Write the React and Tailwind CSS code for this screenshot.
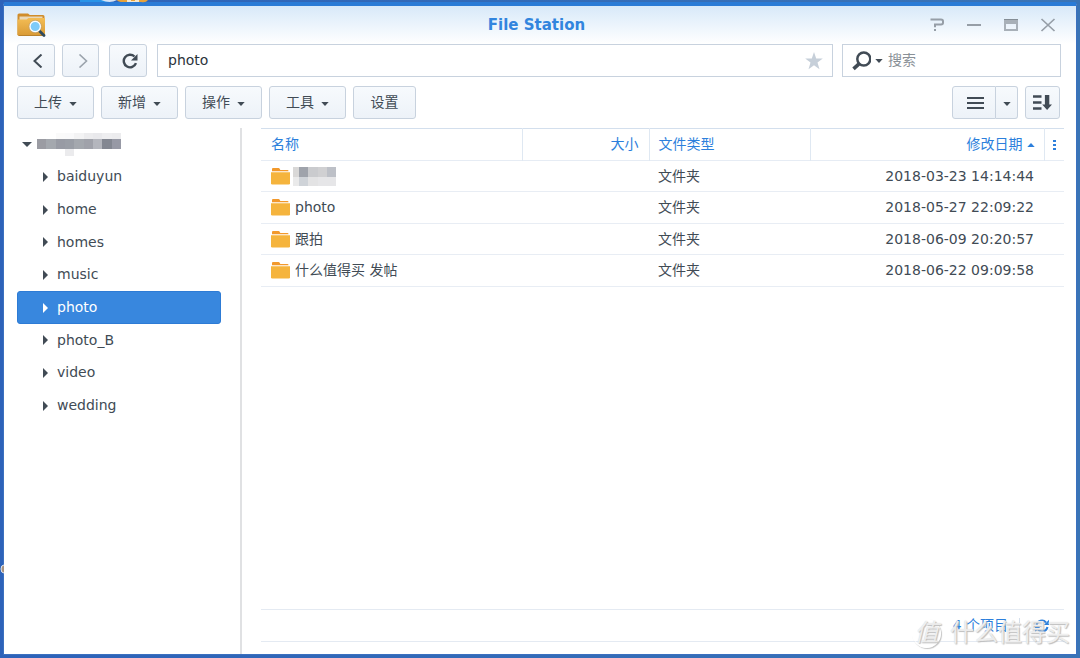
import React from "react";

const menus = ["上传", "新增", "操作", "工具"];
const folders = ["baiduyun", "home", "homes", "music", "photo", "photo_B", "video", "wedding"];
const files = [
  { name: null, date: "2018-03-23 14:14:44" },
  { name: "photo", date: "2018-05-27 22:09:22" },
  { name: "跟拍", date: "2018-06-09 20:20:57" },
  { name: "什么值得买 发帖", date: "2018-06-22 09:09:58" },
];

const buttonStyle =
  "flex h-[33px] items-center justify-center rounded-[3px] border border-[#c8d2de] bg-linear-to-b from-[#f7fafd] to-[#edf2f8] text-[#414b55]";

function Caret({ className = "" }) {
  return (
    <svg width="8" height="4" viewBox="0 0 8 4" className={className} aria-hidden="true">
      <path d="M.3 0h7.4L4 4z" fill="currentColor" />
    </svg>
  );
}

function AppIcon() {
  return (
    <svg width="30" height="26" viewBox="0 0 30 26" aria-hidden="true">
      <defs>
        <linearGradient id="folderFront" x2="0" y2="1">
          <stop stopColor="#f3bd55" />
          <stop offset="1" stopColor="#d99a35" />
        </linearGradient>
      </defs>
      <path d="M.5 3Q.5 1.500 2 1.500h9l1.800 1.500H26q1.500 0 1.500 1.500V23H.5z" fill="#d08d2c" />
      <path d="M2.500 4.500h23v4h-23z" fill="#e9d9ba" />
      <path d="M.5 7.500h9L11.500 6h16.500v16.500q0 1.300-1.300 1.300H1.800Q.5 23.800.5 22.500z" fill="url(#folderFront)" />
      <path d="M1.500 23.500h26" stroke="#b8812d" strokeWidth="1" />
      <path d="M22.500 19l4.500 4.500" stroke="#2f4a5c" strokeWidth="2.800" strokeLinecap="round" />
      <circle cx="18.200" cy="14.500" r="5.300" fill="#7ecbfa" stroke="#fff" strokeWidth="1.500" />
      <circle cx="18.200" cy="14.500" r="6.200" fill="none" stroke="#a8977c" strokeWidth=".5" />
    </svg>
  );
}

function FolderIcon() {
  return (
    <svg width="19" height="17" viewBox="0 0 19 17" className="shrink-0" aria-hidden="true">
      <path d="M1 3.200V1Q1 0 2 0h5.600q.8 0 1.200.9l.5 1.100H16.500q1 0 1 1v.2z" fill="#f2992c" />
      <path d="M0 4.200h19v11q0 1.300-1.300 1.300H1.300Q0 16.500 0 15.200z" fill="#f5b43d" />
    </svg>
  );
}

function Refresh({ size, className }) {
  return (
    <svg width={size} height={size} viewBox="0 0 16 16" className={className} aria-hidden="true">
      <path d="M14 10.200A6.300 6.300 0 1 1 12.500 3.500" fill="none" stroke="currentColor" strokeWidth="2.400" />
      <path d="M15.500 1v6.500H9z" fill="currentColor" />
    </svg>
  );
}

function SyncIcon() {
  return (
    <svg width="16" height="14" viewBox="0 0 16 14" aria-hidden="true">
      <path d="M2.500 6A5.500 5.500 0 0 1 12 3.500M13.500 8A5.500 5.500 0 0 1 4 10.500" fill="none" stroke="currentColor" strokeWidth="2" />
      <path d="M15 .8V6H9.800zM1 13.200V8h5.200z" fill="currentColor" />
    </svg>
  );
}

function HiddenHost() {
  const tones = ["#9b9ca3", "#a4a8ae", "#989ba4", "#9a9ea6", "#a4a8ae", "#a0a2aa", "#b4b6bd", "#838791", "#9799a5"];
  const tops = ["#fff", "#fff", "#fafafa", "#f9f9fa", "#f3f3f4", "#ececee", "#e9e9ec", "#eeeef0", "#ececee"];
  return (
    <svg width="84" height="24" viewBox="0 0 84 24" shapeRendering="crispEdges" aria-hidden="true">
      {tones.map((tone, i) => (
        <g key={i}>
          <rect x={i * 9.33} y="1" width="9.4" height="6" fill={tops[i]} />
          <rect x={i * 9.33} y="7" width="9.4" height="10" fill={tone} />
        </g>
      ))}
      <rect x="28" y="17" width="9.400" height="7" fill="#ebebed" />
    </svg>
  );
}

function HiddenName() {
  return (
    <svg width="43" height="19" viewBox="0 0 43 19" shapeRendering="crispEdges" aria-hidden="true">
      <path d="M0 0h6v10H0z" fill="#d9d8d7" />
      <path d="M6 0h9v10H6z" fill="#9fa3ab" />
      <path d="M15 0h10v10H15z" fill="#cacbce" />
      <path d="M25 0h9v10h-9z" fill="#d0d0d2" />
      <path d="M34 0h9v10h-9z" fill="#bdc0c7" />
      <path d="M0 10h6v9H0z" fill="#eaeaea" />
      <path d="M6 10h9v9H6z" fill="#cfd3d8" />
      <path d="M15 10h10v9H15z" fill="#e3e3e4" />
      <path d="M25 10h18v9H25z" fill="#e6e6e8" />
    </svg>
  );
}

function TitleBar() {
  return (
    <header className="grid h-[38px] grid-cols-[1fr_auto_1fr] items-center bg-linear-to-b from-[#d8e9f9] to-white pr-5 pl-[13px]">
      <AppIcon />
      <h1 className="text-[15px] font-bold text-[#3285de]">File Station</h1>
      <div className="flex items-center justify-end gap-[21px] text-[#969ea7]">
        <button aria-label="帮助">
          <svg width="16" height="14" viewBox="0 0 16 14" aria-hidden="true">
            <path d="M1.500 1.500h10.500q2 0 2 1.700v1.600q0 1.700-2 1.700H6v2.700" fill="none" stroke="currentColor" strokeWidth="2" />
            <path d="M5 11h2v2H5z" fill="currentColor" />
          </svg>
        </button>
        <button aria-label="最小化">
          <svg width="16" height="14" viewBox="0 0 16 14" aria-hidden="true">
            <path d="M1 6h14v2H1z" fill="currentColor" />
          </svg>
        </button>
        <button aria-label="最大化">
          <svg width="16" height="14" viewBox="0 0 16 14" aria-hidden="true">
            <path d="M1 1h14v12H1zM3 6v5h10V6z" fill="#a8b0b8" fillRule="evenodd" />
            <path d="M1 1.500h14" stroke="#848d96" strokeWidth="1" />
          </svg>
        </button>
        <button aria-label="关闭">
          <svg width="16" height="14" viewBox="0 0 16 14" aria-hidden="true">
            <path d="M1.500 1l13 12M14.500 1l-13 12" stroke="currentColor" strokeWidth="1.700" />
          </svg>
        </button>
      </div>
    </header>
  );
}

function NavBar() {
  return (
    <div className="flex pr-[15px] pl-[13px]">
      <button aria-label="后退" className={`${buttonStyle} w-[38px]`}>
        <svg width="10" height="14" viewBox="0 0 10 14" className="ml-1" aria-hidden="true">
          <path d="M8.500.5L1.500 7l7 6.500" fill="none" stroke="currentColor" strokeWidth="2" />
        </svg>
      </button>
      <button aria-label="前进" className={`${buttonStyle} ml-[7px] w-[37px]`}>
        <svg width="10" height="14" viewBox="0 0 10 14" className="ml-1 text-[#9ba3ac]" aria-hidden="true">
          <path d="M1.500.5l7 6.500-7 6.500" fill="none" stroke="currentColor" strokeWidth="1.600" />
        </svg>
      </button>
      <button aria-label="刷新" className={`${buttonStyle} ml-[10px] w-[38px]`}>
        <Refresh size={16} className="ml-1" />
      </button>
      <div className="ml-[10px] flex h-[33px] min-w-0 flex-1 items-center border border-[#c8d2de] bg-white pr-[9px]">
        <input aria-label="路径" defaultValue="photo" className="min-w-0 flex-1 bg-transparent px-[10px] text-[14px] text-[#2b333b] outline-none" />
        <button aria-label="收藏">
          <svg width="18" height="18" viewBox="0 0 18 18" aria-hidden="true">
            <path d="M9 0l2.200 6.400h6.600l-5.300 4.100 2 6.700L9 13.200l-5.500 4 2-6.700L.2 6.400h6.600z" fill="#c6cfd9" />
          </svg>
        </button>
      </div>
      <div className="ml-[9px] flex h-[33px] w-[219px] items-center border border-[#c8d2de] bg-white pl-2 text-[#414b55]">
        <button aria-label="搜索选项" className="flex items-center gap-1">
          <svg width="20" height="20" viewBox="0 0 20 20" aria-hidden="true">
            <circle cx="12.800" cy="8" r="6.500" fill="none" stroke="currentColor" strokeWidth="2.500" />
            <path d="M8 12.800l-5.500 5" stroke="currentColor" strokeWidth="3.600" />
          </svg>
          <Caret />
        </button>
        <input type="search" aria-label="搜索" placeholder="搜索" className="ml-[5px] min-w-0 flex-1 bg-transparent text-[14px] outline-none placeholder:text-[#899097]" />
      </div>
    </div>
  );
}

function ToolBar() {
  return (
    <div className="mt-[9px] flex gap-[7px] pr-[16px] pl-[13px] text-[14px]">
      {menus.map((label) => (
        <button key={label} className={`${buttonStyle} w-[77px] gap-[7px]`}>
          {label}
          <Caret className="mt-[3px]" />
        </button>
      ))}
      <button className={`${buttonStyle} w-[63px]`}>设置</button>
      <div className="ml-auto flex">
        <button aria-label="列表视图" className={`${buttonStyle} w-[44px] rounded-r-none`}>
          <svg width="17" height="12" viewBox="0 0 17 12" className="ml-[2px]" aria-hidden="true">
            <path d="M0 1h17M0 6h17M0 11h17" stroke="currentColor" strokeWidth="2" />
          </svg>
        </button>
        <button aria-label="视图选项" className={`${buttonStyle} w-[22px] rounded-l-none border-l-0`}>
          <Caret className="mt-[3px]" />
        </button>
      </div>
      <button aria-label="排序" className={`${buttonStyle} w-[35px]`}>
        <svg width="19" height="15" viewBox="0 0 19 15" aria-hidden="true">
          <path d="M0 1.500h8.500M0 7.500h8.500M0 13.500h8.500" stroke="currentColor" strokeWidth="2.400" />
          <path d="M11.900 0h4.400v9.500H19L14.100 15 9.200 9.500h2.700z" fill="currentColor" />
        </svg>
      </button>
    </div>
  );
}

function Sidebar() {
  return (
    <nav className="w-[238px] shrink-0 border-r-2 border-[#e0e1e3] pr-[19px] pl-[13px] text-[14px] text-[#414b55]" aria-label="文件夹">
      <button className="flex h-8 w-full items-center gap-[5px] pl-[5px]" aria-label="主机">
        <svg width="10" height="5" viewBox="0 0 10 5" aria-hidden="true">
          <path d="M0 0h10L5 5z" fill="currentColor" />
        </svg>
        <HiddenHost />
      </button>
      <ul>
        {folders.map((name) => (
          <li key={name} className="h-[33px] [&:nth-child(3n)]:h-8">
            <button
              className={`flex size-full items-center gap-[9px] rounded-[3px] border pl-[25px] ${
                name === "photo" ? "border-[#2d7bd5] bg-[#3887de] text-white" : "border-transparent"
              }`}
            >
              <svg width="5" height="10" viewBox="0 0 5 10" aria-hidden="true">
                <path d="M0 0l5 5-5 5z" fill="currentColor" />
              </svg>
              {name}
            </button>
          </li>
        ))}
      </ul>
    </nav>
  );
}

function FileList() {
  return (
    <main className="flex min-w-0 flex-1 flex-col pr-3 pb-3 pl-[19px]">
      <table className="w-full table-fixed border-collapse text-left text-[14px] text-[#414b55]">
        <colgroup>
          <col className="w-[261px]" />
          <col className="w-[127px]" />
          <col className="w-[161px]" />
          <col />
          <col className="w-[20px]" />
        </colgroup>
        <thead>
          <tr className="h-8 border-t border-b border-t-[#d3dfed] border-b-[#e6ecf4] text-[#2c7fdc]">
            <th className="border-r border-[#dfe8f2] pl-[10px] font-normal">名称</th>
            <th className="border-r border-[#dfe8f2] pr-[10px] text-right font-normal">大小</th>
            <th className="border-r border-[#dfe8f2] pl-[9px] font-normal">文件类型</th>
            <th className="border-r border-[#dfe8f2] pr-[9px] font-normal" aria-sort="ascending">
              <span className="flex items-center justify-end gap-1">
                修改日期
                <Caret className="rotate-180" />
              </span>
            </th>
            <th>
              <button aria-label="选择列" className="flex w-full justify-center">
                <svg width="3" height="10" viewBox="0 0 3 10" aria-hidden="true">
                  <path d="M0 0h3v2H0zM0 4h3v2H0zM0 8h3v2H0z" fill="currentColor" />
                </svg>
              </button>
            </th>
          </tr>
        </thead>
        <tbody>
          {files.map((file) => (
            <tr key={file.date} className="h-[31px] border-b border-[#e8edf4] even:h-8">
              <td className="pl-[10px]">
                <span className="flex items-center">
                  <FolderIcon />
                  {file.name ? <span className="ml-[5px]">{file.name}</span> : <span className="ml-[3px]"><HiddenName /></span>}
                </span>
              </td>
              <td />
              <td className="pl-[9px]">文件夹</td>
              <td className="pr-[10px] text-right whitespace-nowrap">{file.date}</td>
              <td />
            </tr>
          ))}
        </tbody>
      </table>
      <footer className="mt-auto flex h-[33px] items-center justify-end border-t border-b border-[#e4eaf2] pr-[14px] text-[14px] text-[#2c7fdc]">
        <span>4 个项目</span>
        <span className="mr-[14px] ml-[11px] h-4 w-px bg-[#d5dfeb]" />
        <button aria-label="刷新列表"><SyncIcon /></button>
      </footer>
    </main>
  );
}

function Watermark() {
  return (
    <div className="pointer-events-none absolute right-[10px] bottom-2 flex items-center gap-[9px] text-[24px] leading-[34px] text-white/70 [text-shadow:1px_1px_1px_#bdbdbd,0_0_1px_#cccccc]">
      <span className="flex size-[29px] items-center justify-center rounded-full border border-white/70 shadow-[1px_1px_1px_#c4c4c4]">
        <i>值</i>
      </span>
      <span>什么值得买</span>
    </div>
  );
}

export default function App() {
  return (
    <div className="relative flex min-h-screen flex-col bg-linear-to-r from-[#2d62b9] to-[#3a74b6] px-1 pb-[3px] font-['DejaVu_Sans','Noto_Sans_CJK_SC',sans-serif]">
      <svg width="150" height="3" viewBox="0 0 150 3" className="absolute top-0 left-0" aria-hidden="true">
        <path d="M80 0h28v2H80z" fill="#2793e8" />
        <path d="M101 0h16q-7 4-16 0z" fill="#d6e3f4" />
        <path d="M117 0h31q-2 3-7 2h-18q-5 0-6-2z" fill="#e7a23a" />
        <path d="M127 0h4v1h4V0h4v2h-12z" fill="#f7e7cc" />
      </svg>
      <svg width="4" height="10" viewBox="0 0 4 10" className="absolute bottom-[84px] left-0" aria-hidden="true">
        <path d="M4 1Q1 1 1 5t3 4" fill="#a9927d" stroke="#e2e7ef" strokeWidth="1" />
      </svg>
      <div className="-mx-px mt-[2px] flex flex-1 flex-col rounded-t-[2px] border border-t-4 border-[#3b70bf] border-t-[#2a7bd6] bg-white">
        <TitleBar />
        <NavBar />
        <ToolBar />
        <div className="mt-[9px] flex flex-1">
          <Sidebar />
          <FileList />
        </div>
      </div>
      <Watermark />
    </div>
  );
}
